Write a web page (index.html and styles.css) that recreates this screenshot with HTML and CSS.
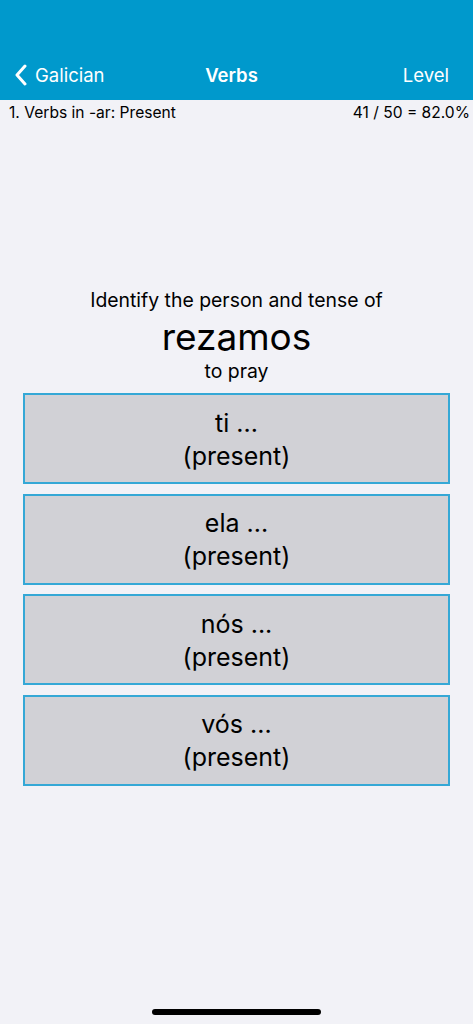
FILE: index.html
```html
<!DOCTYPE html>
<html>
<head>
<meta charset="utf-8">
<link rel="stylesheet" href="styles.css">
</head>
<body>
<div class="app">
  <header class="nav">
    <div class="nav-row">
      <div class="nav-left">
        <svg class="chev" width="14" height="22" viewBox="0 0 14 22"><path d="M11 2 L3 11 L11 20" fill="none" stroke="#fff" stroke-width="3" stroke-linecap="round" stroke-linejoin="round"/></svg>
        <span>Galician</span>
      </div>
      <div class="nav-title">Verbs</div>
      <div class="nav-right">Level</div>
    </div>
  </header>
  <div class="subbar">
    <span>1. Verbs in -ar: Present</span>
    <span>41 / 50 = 82.0%</span>
  </div>
  <main class="content">
    <div class="prompt">Identify the person and tense of</div>
    <div class="word">rezamos</div>
    <div class="meaning">to pray</div>
    <div class="choices">
      <div class="choice">ti ...<br>(present)</div>
      <div class="choice">ela ...<br>(present)</div>
      <div class="choice">nós ...<br>(present)</div>
      <div class="choice">vós ...<br>(present)</div>
    </div>
  </main>
  <div class="home-bar"></div>
</div>
</body>
</html>
```

FILE: styles.css
```css
html, body {
  margin: 0;
  padding: 0;
}
body {
  background: #f2f2f7;
  font-family: Inter, "Noto Sans", sans-serif;
  color: #000;
}
.app {
  width: 473px;
  height: 1024px;
  display: flex;
  flex-direction: column;
  position: relative;
}
.nav {
  background: #0099cc;
  height: 100px;
  display: flex;
  flex-direction: column;
  justify-content: flex-end;
}
.nav-row {
  height: 50px;
  display: grid;
  grid-template-columns: 1fr auto 1fr;
  align-items: center;
  color: #fff;
  font-size: 18.5px;
  padding: 0 24px 0 14px;
}
.nav-left {
  display: flex;
  align-items: center;
  gap: 7px;
}
.nav-title {
  font-weight: 600;
}
.nav-right {
  text-align: right;
}
.subbar {
  display: flex;
  justify-content: space-between;
  padding: 0 3px 0 9px;
  font-size: 15.6px;
  height: 24px;
  align-items: center;
}
.content {
  display: flex;
  flex-direction: column;
  align-items: center;
  padding-top: 164px;
}
.prompt {
  font-size: 19.4px;
  line-height: 24px;
}
.word {
  font-size: 37px;
  line-height: 44px;
  margin-top: 3px;
}
.meaning {
  font-size: 19.4px;
  line-height: 24px;
}
.choices {
  margin-top: 10px;
  display: flex;
  flex-direction: column;
  gap: 9.67px;
  width: 427px;
}
.choice {
  box-sizing: border-box;
  height: 91px;
  background: #d1d1d6;
  border: 2px solid #35a8d6;
  font-size: 25px;
  line-height: 33px;
  padding-top: 2px;
  text-align: center;
  display: flex;
  align-items: center;
  justify-content: center;
}
.home-bar {
  position: absolute;
  left: 152px;
  bottom: 9px;
  width: 169px;
  height: 6px;
  border-radius: 3px;
  background: #000;
}
```
